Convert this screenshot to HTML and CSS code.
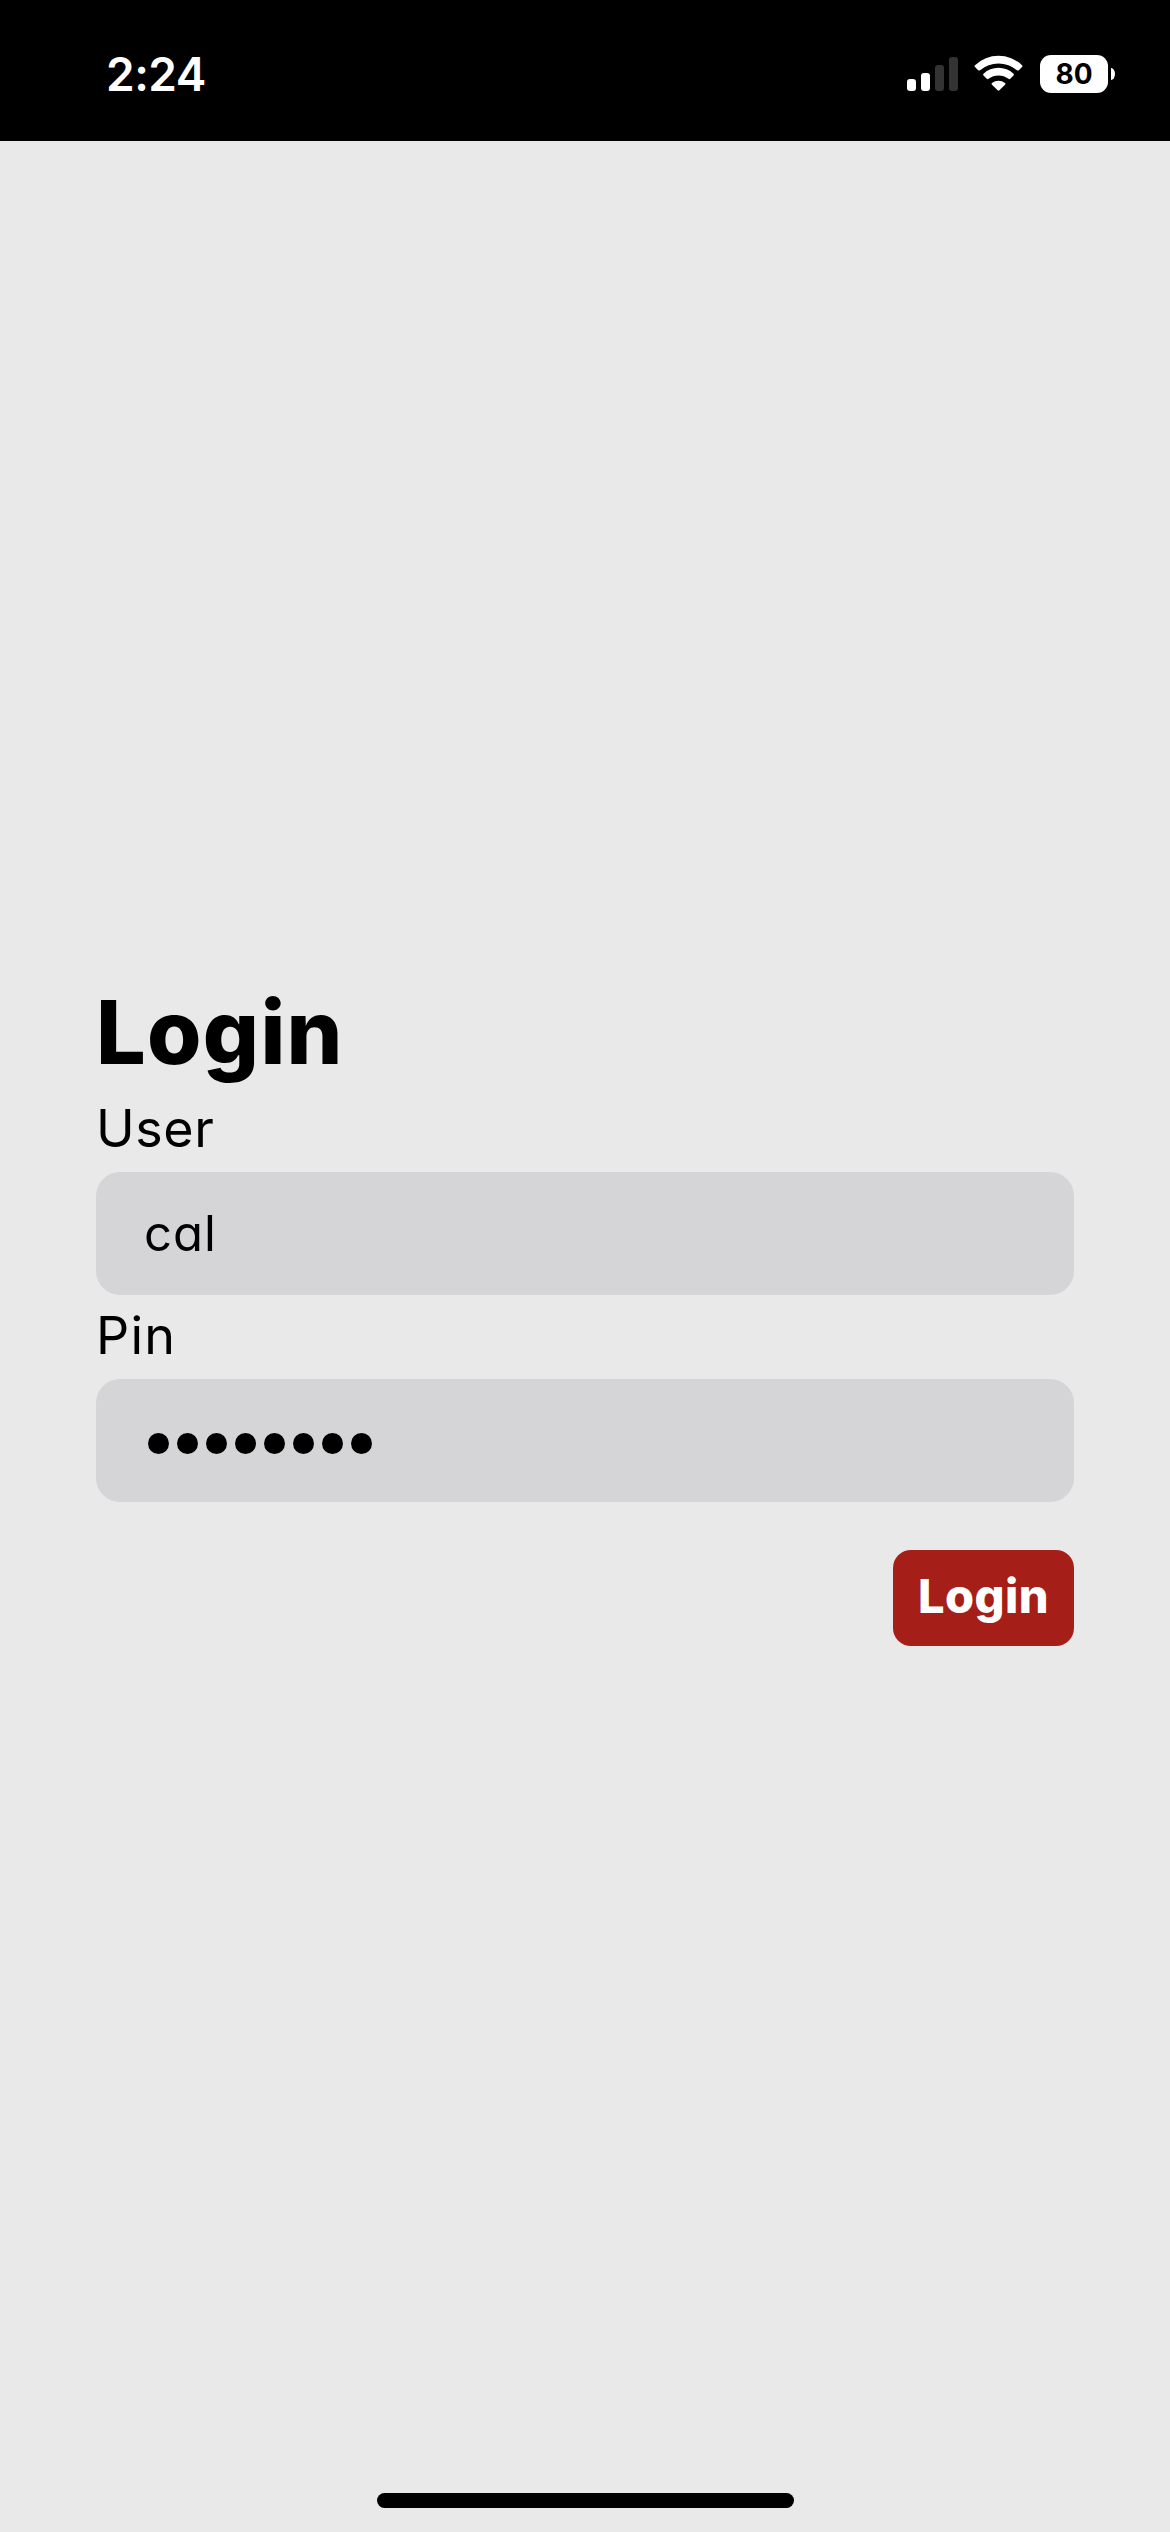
FILE: index.html
```html
<!DOCTYPE html>
<html lang="en">
<head>
<meta charset="utf-8">
<title>Login</title>
<link rel="stylesheet" href="styles.css">
</head>
<body>
<header class="status">
  <div class="time">2:24</div>
  <div class="indicators">
    <div class="signal"><i class="bar b1"></i><i class="bar b2"></i><i class="bar b3 off"></i><i class="bar b4 off"></i></div>
    <svg class="wifi" viewBox="0 0 49 36" width="49" height="36">
      <path d="M1 10.2A34 34 0 0 1 48 10.2Q49 11 48 12L44.8 15.2Q44 16 43 15.2A28.5 28.5 0 0 0 6 15.2Q5 16 4.200 15.200L1 12Q0 11 1 10.200Z"/>
      <path d="M9.500 18.700A22 22 0 0 1 39.500 18.700Q40.500 19.600 39.500 20.600L36.300 23.800Q35.500 24.600 34.500 23.800A16.500 16.500 0 0 0 14.500 23.800Q13.500 24.600 12.700 23.800L9.500 20.600Q8.500 19.600 9.500 18.700Z"/>
      <path d="M18 28A10.500 10.500 0 0 1 31 28Q32 28.800 31 29.700L25.400 35.300Q24.500 36.200 23.600 35.300L18 29.700Q17 28.800 18 28Z"/>
    </svg>
    <div class="battery"><div class="level"><span>80</span></div><i class="cap"></i></div>
  </div>
</header>
<main class="screen">
  <form class="form">
    <h1 class="title">Login</h1>
    <div class="label user">User</div>
    <div class="field"><span class="value">cal</span></div>
    <div class="label pin">Pin</div>
    <div class="field"><div class="dots"><i></i><i></i><i></i><i></i><i></i><i></i><i></i><i></i></div></div>
    <button class="submit" type="button"><span>Login</span></button>
  </form>
</main>
<footer class="home"><div class="handle"></div></footer>
</body>
</html>
```
FILE: styles.css
```css
* { box-sizing: border-box; }
body {
  margin: 0;
  height: 2532px;
  display: flex;
  flex-direction: column;
  background: #e9e9e9;
  color: #000;
  font-family: Inter, "Liberation Sans", sans-serif;
}
.status {
  height: 141px;
  background: #000;
  color: #fff;
  display: flex;
  justify-content: space-between;
  align-items: flex-start;
  padding: 55px 55px 0 106px;
}
.time { font-size: 46px; line-height: 39px; font-weight: 600; letter-spacing: -0.5px; }
.indicators { display: flex; height: 38px; }
.signal { display: flex; align-items: flex-end; gap: 5px; height: 36px; margin-right: 16px; }
.bar { width: 9px; border-radius: 3px; background: #fff; }
.off { background: #333; }
.b1 { height: 12px; }
.b2 { height: 18px; }
.b3 { height: 26px; }
.b4 { height: 34px; }
.wifi { fill: #fff; margin-right: 17px; }
.battery { display: flex; align-items: center; gap: 3px; }
.level {
  width: 68px;
  height: 38px;
  border-radius: 11px;
  background: #fff;
  color: #000;
  text-align: center;
  font-size: 28px;
  line-height: 38px;
  font-weight: 700;
}
.cap { width: 4px; height: 12px; border-radius: 0 4px 4px 0 / 0 6px 6px 0; background: #fff; }
.screen { flex: 1; padding: 835px 96px 0; }
.form { display: flex; flex-direction: column; }
.title { margin: 0; font-size: 88px; line-height: 112px; font-weight: 800; letter-spacing: 1.3px; }
.label { font-size: 52px; line-height: 82px; margin-bottom: 2px; }
.user { letter-spacing: 0.6px; }
.pin { letter-spacing: 1.2px; }
.field {
  height: 123px;
  border-radius: 24px;
  background: #d5d5d7;
  display: flex;
  align-items: center;
  padding: 0 48px;
}
.value { font-size: 49px; line-height: 60px; letter-spacing: 1px; font-feature-settings: "cv11"; }
.dots { display: flex; gap: 8px; padding: 5px 0 0 4px; }
.dots i { width: 21px; height: 21px; border-radius: 50%; background: #000; }
.submit {
  align-self: flex-end;
  width: 181px;
  height: 96px;
  margin-top: 48px;
  padding: 0 0 4px;
  border: 0;
  border-radius: 18px;
  background: #a51e18;
  color: #fff;
  font: 800 47px/92px Inter, "Liberation Sans", sans-serif;
  letter-spacing: 0.4px;
  white-space: nowrap;
}
.home { display: flex; justify-content: center; height: 39px; }
.handle { width: 417px; height: 15px; border-radius: 8px; background: #000; margin-left: 1px; }
```
